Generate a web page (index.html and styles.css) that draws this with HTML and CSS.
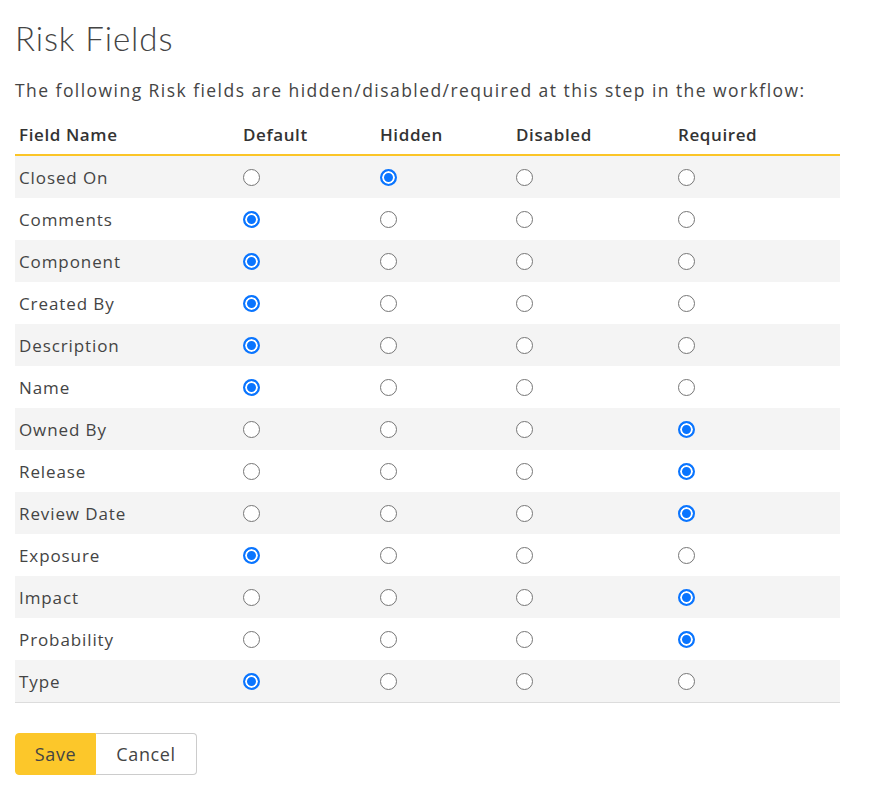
FILE: index.html
```html
<!DOCTYPE html>
<html>
<head>
<meta charset="utf-8">
<link rel="stylesheet" href="styles.css">
</head>
<body>
<div class="page">
  <h1 class="title">Risk Fields</h1>
  <p class="intro">The following Risk fields are hidden/disabled/required at this step in the workflow:</p>
  <table class="grid">
    <thead>
      <tr><th class="c-name">Field Name</th><th class="c-def">Default</th><th class="c-hid">Hidden</th><th class="c-dis">Disabled</th><th class="c-req">Required</th></tr>
    </thead>
    <tbody id="rows"></tbody>
  </table>
  <div class="btns">
    <button class="btn save">Save</button><button class="btn cancel">Cancel</button>
  </div>
</div>
<script>
var data=[["Closed On",1],["Comments",0],["Component",0],["Created By",0],["Description",0],["Name",0],["Owned By",3],["Release",3],["Review Date",3],["Exposure",0],["Impact",3],["Probability",3],["Type",0]];
var tb=document.getElementById("rows");
data.forEach(function(d,i){
  var tr=document.createElement("tr");
  var h='<td class="c-name">'+d[0]+'</td>';
  for(var k=0;k<4;k++){h+='<td><input type="radio" class="rad" name="r'+i+'"'+(k===d[1]?' checked':'')+'></td>';}
  tr.innerHTML=h;tb.appendChild(tr);
});
</script>
</body>
</html>
```
FILE: styles.css
```css
html,body{margin:0;padding:0;background:#fff;}
body{font-family:"Open Sans","Noto Sans",sans-serif;color:#444;}
.page{padding:0 15px;}
.title{font-family:"Lato",sans-serif;font-weight:300;font-size:33px;color:#444;margin:0;padding-top:18px;height:42px;line-height:40px;letter-spacing:0.9px;}
.intro{margin:18px 0 0;font-size:17.5px;line-height:24px;letter-spacing:1.45px;color:#444;}
.grid{border-collapse:collapse;width:825px;margin-top:12px;table-layout:fixed;}
.grid th{font-weight:600;font-size:17px;text-align:left;color:#333;height:40px;padding:0 0 0 4px;border-bottom:2px solid #fbc527;vertical-align:middle;letter-spacing:0.6px;}
.grid td{height:42px;padding:0 0 0 4px;font-size:17px;vertical-align:middle;color:#444;letter-spacing:0.9px;}
.grid tbody tr:nth-child(odd){background:#f4f4f4;}
.grid tbody tr:last-child td{border-bottom:1px solid #dcdcdc;}
.c-name{width:220px;}
.c-def{width:133px;}
.c-hid{width:132px;}
.c-dis{width:158px;}
.rad{appearance:none;-webkit-appearance:none;width:17px;height:17px;margin:0;border:1.5px solid #767676;border-radius:50%;background:#fff;box-sizing:border-box;display:block;}
.rad:checked{border:2px solid #0a75ff;box-shadow:inset 0 0 0 2px #fff;background:#0a75ff;}
.btns{display:flex;margin-top:30px;}
.btn{font-family:"Open Sans","Noto Sans",sans-serif;font-size:18px;height:42px;box-sizing:border-box;color:#444;cursor:pointer;letter-spacing:0.6px;}
.save{background:#fcc72a;border:1px solid #fcc72a;border-radius:4px 0 0 4px;width:81px;}
.cancel{background:#fff;border:1px solid #ccc;border-left:none;border-radius:0 4px 4px 0;width:101px;}
```
